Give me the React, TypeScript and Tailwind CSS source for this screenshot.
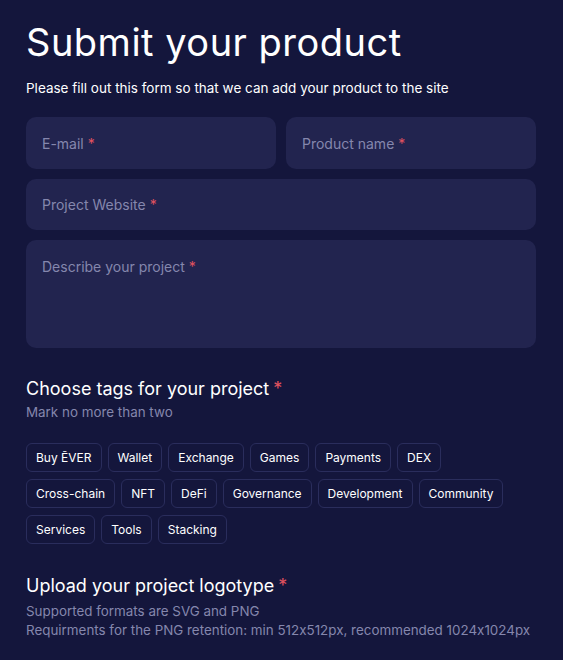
const TAGS = [
  "Buy ĒVER",
  "Wallet",
  "Exchange",
  "Games",
  "Payments",
  "DEX",
  "Cross-chain",
  "NFT",
  "DeFi",
  "Governance",
  "Development",
  "Community",
  "Services",
  "Tools",
  "Stacking",
];

const Req = () => <span className="ml-[4px] text-[#e0525f]">*</span>;

const Field = ({ label, className = "" }: { label: string; className?: string }) => (
  <div className={"rounded-[10px] bg-[#22244f] px-4 text-[14px] text-[#8587ad] " + className}>
    <span>{label}</span>
    <Req />
  </div>
);

export default function App() {
  return (
    <div
      className="min-h-[660px] w-full bg-[#14163c] px-[26px] pt-[20px] text-white [font-feature-settings:'calt'_0]"
      style={{ fontFamily: "Inter, 'Noto Sans', sans-serif" }}
    >
      <h1 className="text-[38px] leading-[44px] font-normal tracking-[0.5px]">Submit your product</h1>
      <p className="mt-[15px] text-[13.5px] leading-[18px]">
        Please fill out this form so that we can add your product to the site
      </p>

      <div className="mt-[20px] flex flex-col gap-[10px] w-[510px]">
        <div className="grid grid-cols-2 gap-[10px]">
          <Field label="E-mail" className="flex h-[52px] items-center" />
          <Field label="Product name" className="flex h-[52px] items-center" />
        </div>
        <Field label="Project Website" className="flex h-[51px] items-center" />
        <Field label="Describe your project" className="h-[108px] pt-[16px]" />
      </div>

      <h2 className="mt-[29px] text-[18px] leading-[24px]">
        Choose tags for your project
        <Req />
      </h2>
      <p className="mt-[2px] text-[13.4px] leading-[18px] text-[#8587ad]">Mark no more than two</p>

      <div className="mt-[22px] flex w-[495px] flex-wrap gap-x-[6px] gap-y-[7px]">
        {TAGS.map((t) => (
          <span
            key={t}
            className="flex h-[29px] items-center rounded-[6px] border border-[#2a2d5c] px-[9px] text-[12px]"
          >
            {t}
          </span>
        ))}
      </div>

      <h2 className="mt-[30px] text-[18px] leading-[24px]">
        Upload your project logotype
        <Req />
      </h2>
      <p className="mt-[4px] text-[13.4px] leading-[19px] text-[#8587ad]">
        Supported formats are SVG and PNG
        <br />
        Requirments for the PNG retention: min 512x512px, recommended 1024x1024px
      </p>
    </div>
  );
}
